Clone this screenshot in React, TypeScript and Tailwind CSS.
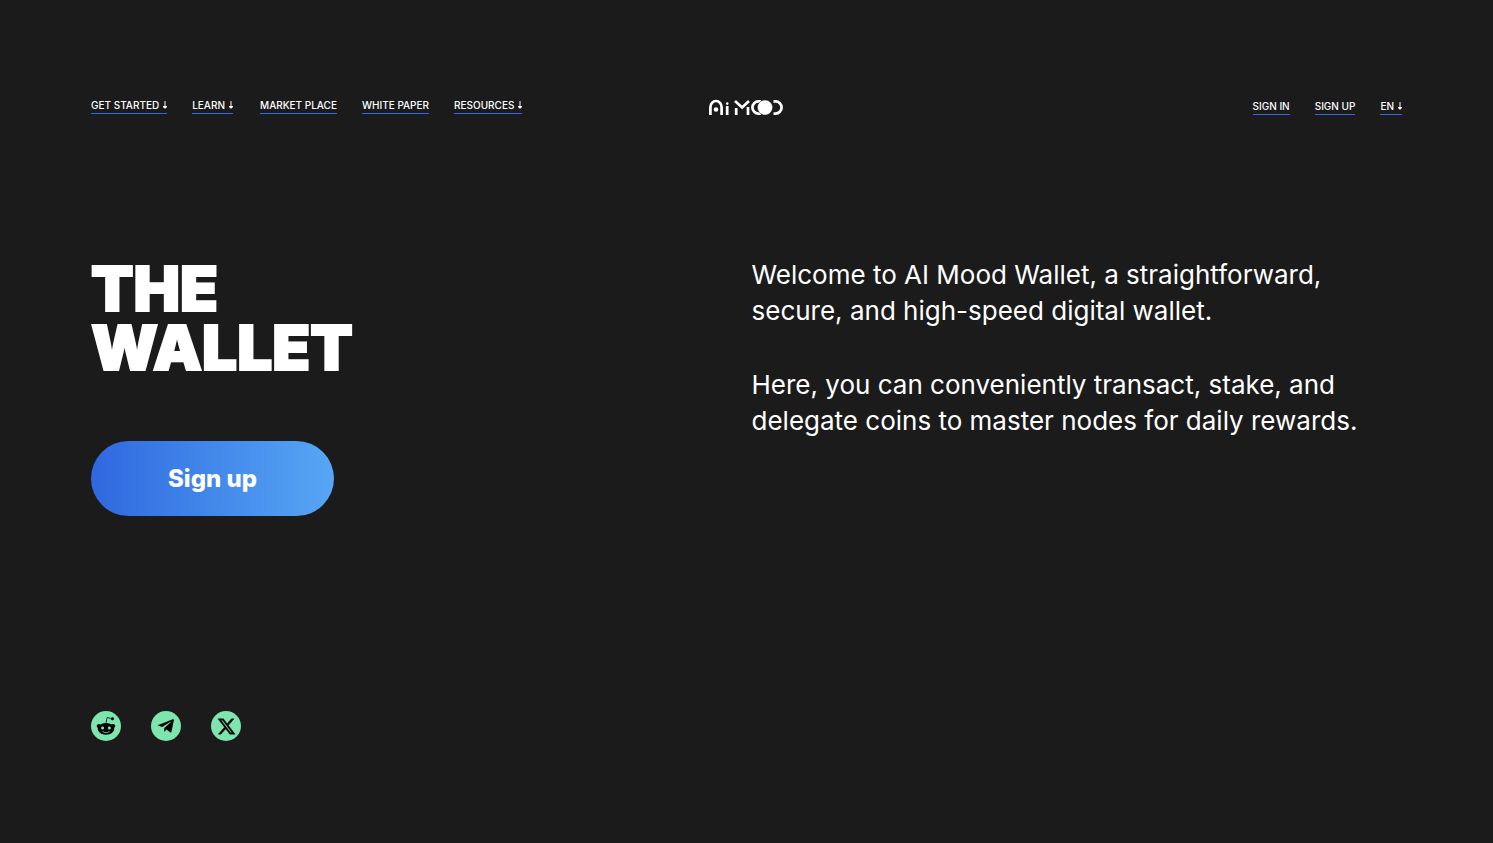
import React from 'react';
import { FaRedditAlien, FaTelegramPlane } from 'react-icons/fa';

type NavItem = { label: string; menu?: boolean };

const productNav: NavItem[] = [
  { label: 'GET STARTED', menu: true },
  { label: 'LEARN', menu: true },
];

const siteNav: NavItem[] = [
  { label: 'MARKET PLACE' },
  { label: 'WHITE PAPER' },
  { label: 'RESOURCES', menu: true },
];

const accountNav: NavItem[] = [{ label: 'SIGN IN' }, { label: 'SIGN UP' }, { label: 'EN', menu: true }];

function DownArrow() {
  return (
    <svg width="4" height="8" viewBox="0 0 4 8" aria-hidden="true" className="mb-px">
      <path d="M1.2 0h1.6v5H1.2z" fill="#a8a8a8" />
      <path d="M0 5h4v1L2.5 7.6h-1L0 6z" fill="#fff" />
    </svg>
  );
}

function NavLink({ label, menu }: NavItem) {
  return (
    <a
      href="#"
      className="flex items-center gap-1 border-b border-[#2f6be0] text-[10px] leading-4 font-medium whitespace-nowrap"
    >
      {label}
      {menu && <DownArrow />}
    </a>
  );
}

function NavGroup({ items }: { items: NavItem[] }) {
  return (
    <div className="flex gap-[25px]">
      {items.map((item) => (
        <NavLink key={item.label} {...item} />
      ))}
    </div>
  );
}

function Logo() {
  return (
    <svg width="75" height="16" viewBox="0 0 75 16" role="img" aria-label="Ai Mood">
      <g fill="none" stroke="#fff" strokeWidth="2.7">
        <path d="M1.4 16V8.2a5.6 6.2 0 0 1 11.2 0V16" />
        <path d="M18.2 7v9M27.2 9v7M39 8v8" />
        <path d="M26 2l7.1 6.4L40 2" />
        <path d="M52 2.4H49.5a6.1 6.1 0 0 0 0 12.2h2.5" />
        <path d="M64.5 2.4h2a6.1 6.1 0 0 1 0 12.2h-2" />
      </g>
      <circle cx="7" cy="10.5" r="2.3" fill="#fff" />
      <circle cx="18.2" cy="4.6" r="1.3" fill="#fff" />
      <circle cx="56" cy="8.5" r="7.6" fill="#fff" stroke="#1b1b1b" strokeWidth="0.5" />
    </svg>
  );
}

function XLogo({ size }: { size: number }) {
  return (
    <svg width={size} height={size} viewBox="0 0 24 24" fill="currentColor" aria-hidden="true">
      <path
        stroke="currentColor"
        strokeWidth="0.5"
        d="M18.244 2.25h3.308l-7.227 8.26 8.502 11.24H16.17l-5.214-6.817L4.99 21.75H1.68l7.73-8.835L1.254 2.25H8.08l4.713 6.231zm-1.161 17.52h1.833L7.084 4.126H5.117z"
      />
    </svg>
  );
}

const socials = [
  { name: 'Reddit', icon: <FaRedditAlien size={20} /> },
  { name: 'Telegram', icon: <FaTelegramPlane size={18} /> },
  { name: 'X', icon: <XLogo size={19} /> },
];

export default function App() {
  return (
    <div className="flex min-h-screen flex-col bg-[#1b1b1b] px-[91px] pt-[97px] pb-[102px] font-['Inter',sans-serif] text-white">
      <header className="grid grid-cols-[1fr_auto_1fr] items-start">
        <nav className="flex gap-[27px]">
          <NavGroup items={productNav} />
          <NavGroup items={siteNav} />
        </nav>
        <a href="#" className="pt-0.5">
          <Logo />
        </a>
        <nav className="flex justify-end pt-px">
          <NavGroup items={accountNav} />
        </nav>
      </header>
      <main className="mt-[142px] grid grid-cols-2 gap-x-[10px]">
        <div>
          <h1 className="pt-0.5 text-[62px] leading-[59px] font-black [-webkit-text-stroke:2px_white]">
            <span className="block">THE</span>
            <span className="block">WALLET</span>
          </h1>
          <button
            type="button"
            className="mt-16 h-[75px] w-[243px] rounded-full bg-linear-to-r from-[#3068df] to-[#58a6f5] text-2xl font-extrabold"
          >
            Sign up
          </button>
        </div>
        <div className="space-y-[38px] text-[26px] leading-9">
          <p>
            Welcome to AI Mood Wallet, a straightforward,
            <br />
            secure, and high-speed digital wallet.
          </p>
          <p>
            Here, you can conveniently transact, stake, and
            <br />
            delegate coins to master nodes for daily rewards.
          </p>
        </div>
      </main>
      <footer className="mt-auto flex gap-[30px]">
        {socials.map(({ name, icon }) => (
          <a
            key={name}
            href="#"
            aria-label={name}
            className="grid size-[30px] place-items-center rounded-full bg-[#7ee5ae] text-black"
          >
            {icon}
          </a>
        ))}
      </footer>
    </div>
  );
}
